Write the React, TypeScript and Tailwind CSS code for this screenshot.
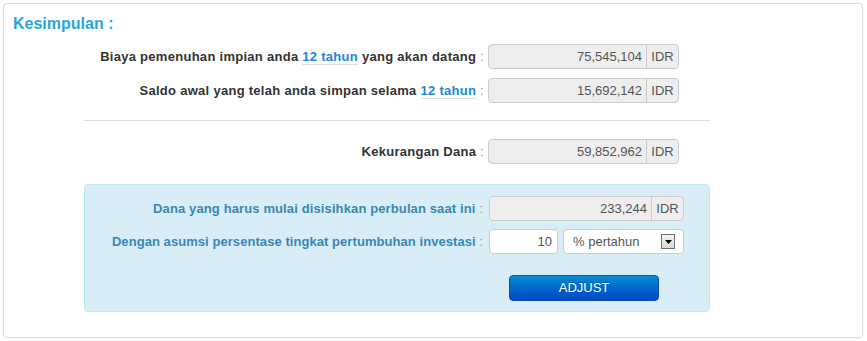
const font = { fontFamily: '"Liberation Sans", Arial, sans-serif' };

function ReadonlyMoney({ value, className = "" }: { value: string; className?: string }) {
  return (
    <div
      className={`flex h-[25px] rounded-[4px] border border-[#cccccc] bg-[#eeeeee] text-[13px] text-[#555555] ${className}`}
    >
      <div className="flex flex-1 items-center justify-end pr-[4px]">{value}</div>
      <div className="flex w-[32px] items-center justify-center border-l border-[#cccccc]">IDR</div>
    </div>
  );
}

function Tahun() {
  return <span className="border-b border-[#dddddd] font-bold text-[#1c87d8]">12 tahun</span>;
}

function Colon() {
  return <span className="font-normal text-[#999999]"> :</span>;
}

export default function App() {
  return (
    <div className="h-[341px] w-[867px] bg-white pl-[3px] pt-[3px]" style={font}>
      <div className="h-[335px] w-[860px] rounded-[4px] border border-[#dcdcdc] bg-white shadow-[0_0_2px_rgba(0,0,0,0.06)]">
        {/* heading */}
        <h2 className="mt-[10px] pl-[9px] text-[16px] font-bold leading-[20px] text-[#29a6e0]">Kesimpulan :</h2>

        <div className="mt-[10px] flex items-center">
          <div className="w-[480px] text-right text-[13px] font-bold tracking-[0.28px] text-[#333333]">
            Biaya pemenuhan impian anda <Tahun /> yang akan datang
            <Colon />
          </div>
          <ReadonlyMoney value="75,545,104" className="ml-[4px] w-[191px]" />
        </div>

        <div className="mt-[9px] flex items-center">
          <div className="w-[480px] text-right text-[13px] font-bold tracking-[0.28px] text-[#333333]">
            Saldo awal yang telah anda simpan selama <Tahun />
            <Colon />
          </div>
          <ReadonlyMoney value="15,692,142" className="ml-[4px] w-[191px]" />
        </div>

        <div className="ml-[80px] mt-[17px] h-px w-[626px] bg-[#dddddd]" />

        <div className="mt-[18px] flex items-center">
          <div className="w-[480px] text-right text-[13px] font-bold tracking-[0.28px] text-[#333333]">
            Kekurangan Dana
            <Colon />
          </div>
          <ReadonlyMoney value="59,852,962" className="ml-[4px] w-[191px]" />
        </div>

        {/* info box */}
        <div className="ml-[80px] mt-[20px] w-[626px] rounded-[4px] border border-[#bce8f1] bg-[#d9edf7] pb-[10px] pt-[11px]">
          <div className="flex items-center">
            <div className="w-[398px] text-right text-[13px] font-bold tracking-[0.12px] text-[#3a87b4]">
              Dana yang harus mulai disisihkan perbulan saat ini
              <Colon />
            </div>
            <ReadonlyMoney value="233,244" className="ml-[6px] w-[195px]" />
          </div>

          <div className="mt-[8px] flex items-center">
            <div className="w-[398px] text-right text-[13px] font-bold tracking-[0.06px] text-[#3a87b4]">
              Dengan asumsi persentase tingkat pertumbuhan investasi
              <Colon />
            </div>
            <div className="ml-[6px] flex h-[25px] w-[69px] items-center justify-end rounded-[4px] border border-[#cccccc] bg-white pr-[5px] text-[13px] text-[#555555]">
              10
            </div>
            <div className="ml-[5px] flex h-[25px] w-[121px] items-center justify-between rounded-[4px] border border-[#cccccc] bg-white pl-[9px] pr-[8px] text-[13px] text-[#555555]">
              <span>% pertahun</span>
              <span className="flex h-[15px] w-[14px] items-center justify-center border border-[#707070] bg-gradient-to-b from-[#f4f4f4] to-[#d8d8d8]">
                <svg width="7" height="4" viewBox="0 0 7 4">
                  <path d="M0 0h7L3.5 4z" fill="#000" />
                </svg>
              </span>
            </div>
          </div>

          <div className="mt-[21px] flex">
            <button className="ml-[424px] h-[26px] w-[150px] rounded-[4px] border border-[#0a4fb8] bg-gradient-to-b from-[#0a8ad2] to-[#0445c6] text-[13px] text-white [text-shadow:0_-1px_0_rgba(0,0,0,0.25)]">
              ADJUST
            </button>
          </div>
        </div>
      </div>
    </div>
  );
}
